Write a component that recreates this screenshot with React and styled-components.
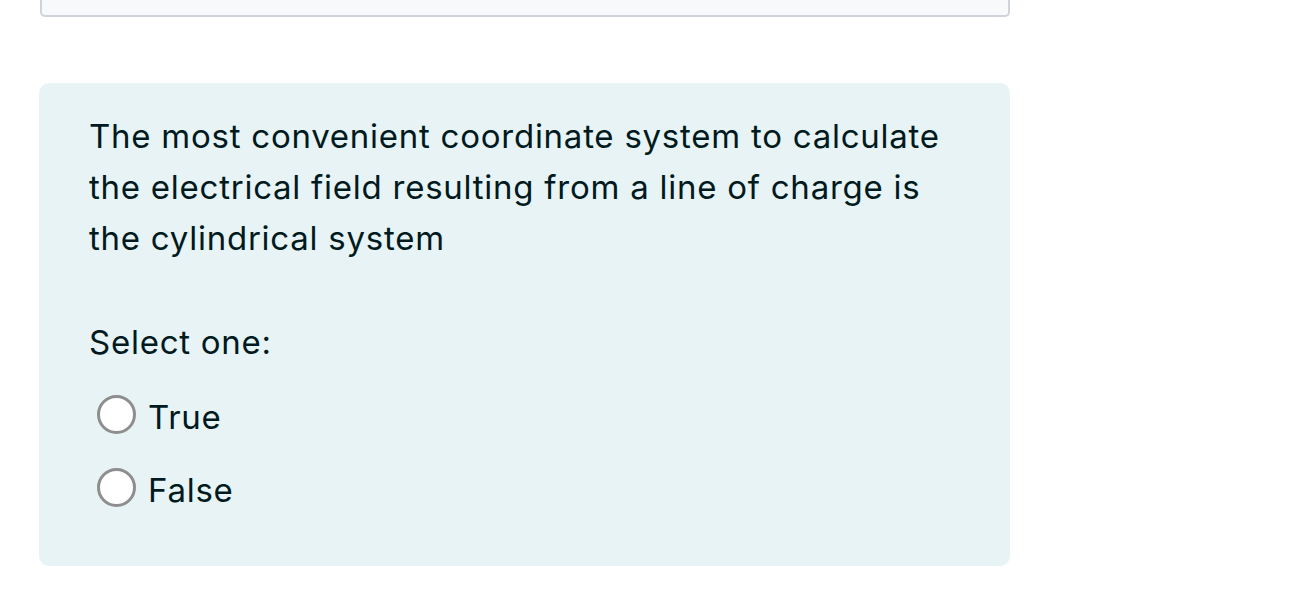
import styled, { createGlobalStyle } from "styled-components";

const Global = createGlobalStyle`
  body {
    margin: 0;
    background: #ffffff;
    font-family: Inter, "Liberation Sans", Arial, sans-serif;
  }
`;

const Page = styled.div`
  display: flex;
  flex-direction: column;
  padding-left: 39px;
  width: 971px;
`;

const PrevBox = styled.div`
  height: 15px;
  margin-left: 1px;
  width: 966px;
  background: #f8f9fa;
  border: 2px solid #cfd4db;
  border-top: none;
  border-radius: 0 0 5px 5px;
`;

const Formulation = styled.div`
  margin-top: 66px;
  background: #e7f3f5;
  color: #001a1e;
  border-radius: 10px;
  padding: 28px 50px 50px 50px;
  display: flex;
  flex-direction: column;
  font-size: 33px;
  letter-spacing: 0.75px;
  line-height: 51px;
`;

const QText = styled.p`
  margin: 0;
  max-width: 875px;
`;

const Prompt = styled.div`
  margin-top: 53px;
`;

const Answers = styled.div`
  margin-top: 24px;
  display: flex;
  flex-direction: column;
  gap: 22px;
`;

const Option = styled.label`
  display: flex;
  align-items: center;
  gap: 12px;
  padding-left: 8px;
`;

const Radio = styled.span`
  width: 33px;
  height: 33px;
  border-radius: 50%;
  border: 3px solid #8e8e8e;
  background: #ffffff;
  flex-shrink: 0;
  margin-top: -6px;
`;

export default function App() {
  const options = ["True", "False"];
  return (
    <>
      <Global />
      <Page>
        <PrevBox />
        <Formulation>
          <QText>
            The most convenient coordinate system to calculate the electrical
            field resulting from a line of charge is the cylindrical system
          </QText>
          <Prompt>Select one:</Prompt>
          <Answers>
            {options.map((o) => (
              <Option key={o}>
                <Radio />
                {o}
              </Option>
            ))}
          </Answers>
        </Formulation>
      </Page>
    </>
  );
}
